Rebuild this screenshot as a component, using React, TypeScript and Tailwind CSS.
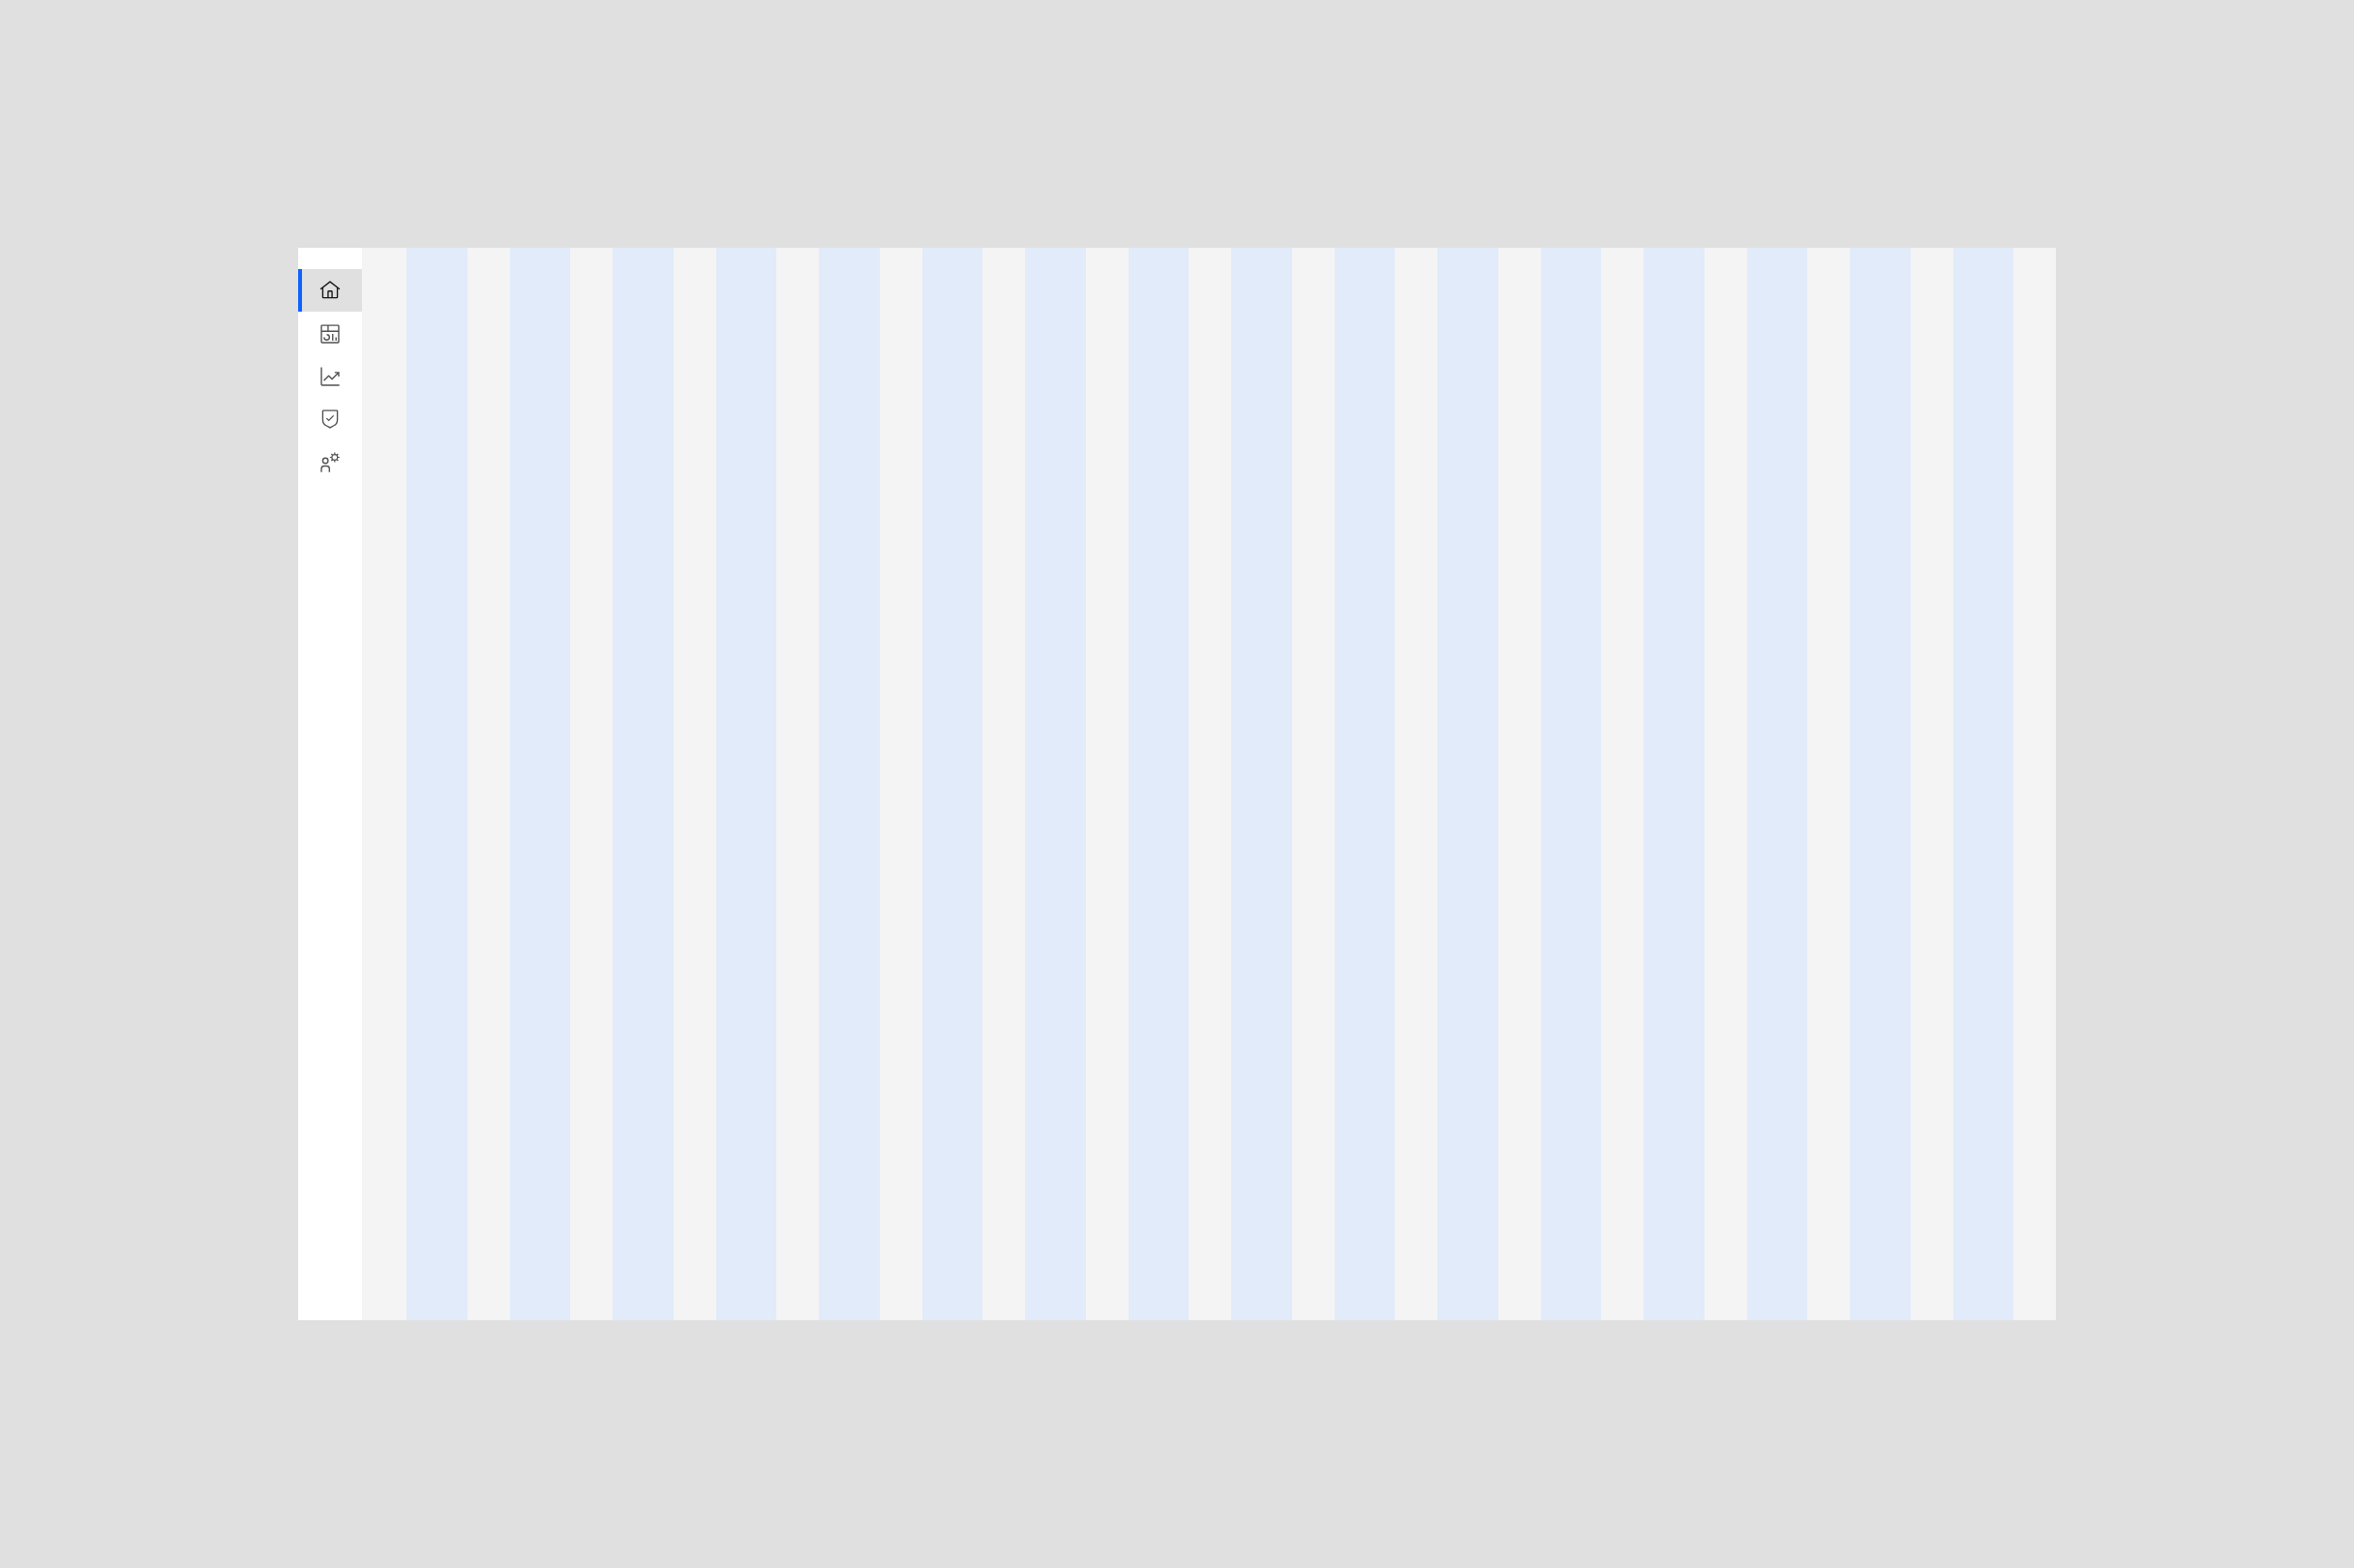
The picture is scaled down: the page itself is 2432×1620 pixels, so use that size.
import type { ReactNode } from "react";

type NavItem = { label: string; active?: boolean; icon: ReactNode };

const items: NavItem[] = [
  {
    label: "Home",
    active: true,
    icon: (
      <path d="M16.6123,2.2138a1.01,1.01,0,0,0-1.2427,0L1,13.4194l1.2427,1.5717L4,13.6208V26a2.0041,2.0041,0,0,0,2,2H26a2.0037,2.0037,0,0,0,2-2V13.63L29.7573,15,31,13.4282ZM18,26H14V18h4Zm2,0V18a2.0023,2.0023,0,0,0-2-2H14a2.002,2.002,0,0,0-2,2v8H6V12.0615l10-7.79,10,7.8005V26Z" />
    ),
  },
  {
    label: "Dashboard",
    icon: (
      <>
        <path d="M24 21H26V26H24zM19 16H21V26H19z" />
        <path d="M11,26a5.0059,5.0059,0,0,1-5-5H8a3,3,0,1,0,3-3V16a5,5,0,0,1,0,10Z" />
        <path d="M28,2H4A2.002,2.002,0,0,0,2,4V28a2.0023,2.0023,0,0,0,2,2H28a2.0027,2.0027,0,0,0,2-2V4A2.0023,2.0023,0,0,0,28,2Zm0,9H14V4H28ZM12,4v7H4V4ZM4,28V13H28.0007l.0013,15Z" />
      </>
    ),
  },
  {
    label: "Analytics",
    icon: (
      <>
        <path d="M4,2H2V28a2,2,0,0,0,2,2H30V28H4Z" />
        <path d="M30,9H23v2h3.59L19,18.59l-4.29-4.3a1,1,0,0,0-1.42,0L6,21.59,7.41,23,14,16.41l4.29,4.3a1,1,0,0,0,1.42,0L28,12.41V16h2Z" />
      </>
    ),
  },
  {
    label: "Security",
    icon: (
      <>
        <path d="M14 16.59L11.41 14 10 15.41 14 19.41 22 11.41 20.59 10 14 16.59z" />
        <path d="M16,30,9.8242,26.7071A10.9815,10.9815,0,0,1,4,17V4A2.0021,2.0021,0,0,1,6,2H26a2.0021,2.0021,0,0,1,2,2V17a10.9815,10.9815,0,0,1-5.8242,9.7071ZM6,4V17a8.9852,8.9852,0,0,0,4.7656,7.9423L16,27.7333l5.2344-2.791A8.9852,8.9852,0,0,0,26,17V4Z" />
      </>
    ),
  },
  {
    label: "User administration",
    icon: (
      <>
        <path d="M16,30H14V25a3,3,0,0,0-3-3H7a3,3,0,0,0-3,3v5H2V25a5,5,0,0,1,5-5h4a5,5,0,0,1,5,5Z" />
        <path d="M9,10a3,3,0,1,1-3,3,3,3,0,0,1,3-3m0-2a5,5,0,1,0,5,5A5,5,0,0,0,9,8Z" />
        <g fill="none" stroke="currentColor" strokeWidth="1.8">
          <circle cx="23" cy="8" r="4.3" />
          <path d="M23 .8V3.5M23 12.5V15.2M15.8 8H18.5M27.5 8H30.2M17.9 2.9L19.8 4.8M26.2 11.2L28.1 13.1M28.1 2.9L26.2 4.8M19.8 11.2L17.9 13.1" />
        </g>
      </>
    ),
  },
];

function SideRail() {
  return (
    <nav aria-label="Main" className="w-[66px] shrink-0 bg-white pt-[22px]">
      <ul className="grid h-[222px] grid-rows-5">
        {items.map((item) => (
          <li key={item.label} className="flex">
            <button
              type="button"
              aria-label={item.label}
              aria-current={item.active ? "page" : undefined}
              className={
                item.active
                  ? "flex flex-1 items-center justify-center border-l-4 border-[#0f62fe] bg-[#e0e0e0] pr-1 text-[#161616]"
                  : "flex flex-1 items-center justify-center text-[#525252]"
              }
            >
              <svg viewBox="0 0 32 32" fill="currentColor" aria-hidden="true" className="size-[22px]">
                {item.icon}
              </svg>
            </button>
          </li>
        ))}
      </ul>
    </nav>
  );
}

export default function App() {
  return (
    <div className="flex min-h-screen bg-[#e0e0e0] px-[308px] py-[256px]">
      <div className="flex flex-1 bg-[#f4f4f4]">
        <SideRail />
        <main className="grid flex-1 grid-cols-16 gap-x-11 pr-11 pl-[46px]">
          {Array.from({ length: 16 }, (_, i) => (
            <div key={i} className="bg-[#e1ebfa]" />
          ))}
        </main>
      </div>
    </div>
  );
}
